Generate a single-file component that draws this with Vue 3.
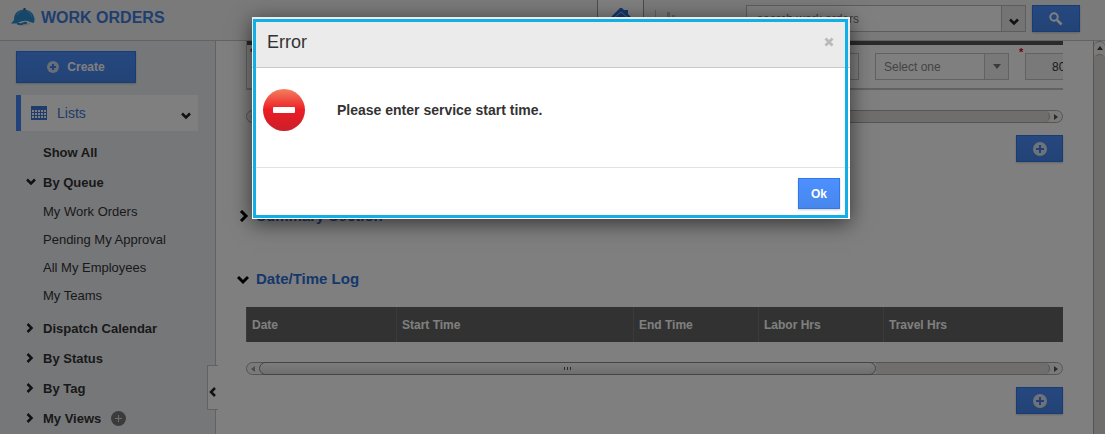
<template>
  <div class="app">
    <header class="topbar">
      <div class="brand">
        <svg width="24" height="18" viewBox="0 0 24 18">
          <path d="M3 11.500C3 5 7.500 1.500 13 1.500S23 5.500 23.500 11c.2 2-.3 3.500-1 4-3-.5-5-2.500-9-2.200-4 .2-6 2.500-9 2.700H0c1-1.500 2.500-2 3-4z" fill="#2f8fd0" />
          <path d="M13.500 0v2" stroke="#3a5a70" stroke-width="2" />
          <path d="M6 7c1-2.500 3-4 5-4.500M16 3c2.500 1 4 3 5 6" fill="none" stroke="#5cb2ea" />
          <path d="M6 16c2-1 3 1 5 0s3-2 5-.5" fill="none" stroke="#2f8fd0" stroke-width="2" />
          <path d="M12 17c2 0 5 0 7-2" fill="none" stroke="#c3ccd2" />
        </svg>
        <h1>WORK ORDERS</h1>
      </div>
      <div class="tools">
        <a href="#" class="home" aria-label="Home">
          <svg width="20" height="18" viewBox="0 0 20 18">
            <path d="M13 2h4v6h-4z" fill="#2a6fd6" />
            <path d="M9 0h2l9 9v1h-3v8H3v-8H0V9z" fill="#2a6fd6" />
            <path d="M3 10l7-6 7 6" fill="none" stroke="#b4cbee" />
            <path d="M8 12h4v6H8z" fill="#fff" />
          </svg>
        </a>
        <a href="#" class="chart" aria-label="Reports">
          <svg width="24" height="18" viewBox="0 0 24 18">
            <path d="M0 0h1v18H0zM12 2h3v16h-3zM17 5h3v13h-3zM7 9h3v9H7z" fill="#c0c0c0" />
          </svg>
        </a>
      </div>
      <div class="search">
        <input v-model="query" type="text" aria-label="Search" placeholder="search work orders" />
        <button class="search-options" aria-label="Search options">
          <svg width="10" height="8" viewBox="0 0 10 8"><path d="M1 1.500l4 4 4-4" /></svg>
        </button>
        <button class="btn search-go" aria-label="Search">
          <svg width="14" height="14" viewBox="0 0 14 14">
            <circle cx="5" cy="5" r="3.700" fill="none" stroke="#fff" stroke-width="2" />
            <path d="M8 8l4.500 4.500" stroke="#fff" stroke-width="2.500" />
          </svg>
        </button>
      </div>
    </header>

    <div class="main">
      <aside class="sidebar">
        <button class="btn create">
          <svg width="12" height="12" viewBox="0 0 12 12">
            <circle cx="6" cy="6" r="6" fill="#d0dcf2" />
            <path d="M6 3v6M3 6h6" stroke="#4584ee" stroke-width="2" />
          </svg>
          Create
        </button>
        <button class="lists">
          <svg width="16" height="14" viewBox="0 0 16 14">
            <path d="M0 0h16v14H0z" fill="#4078d8" />
            <path d="M1 5h14M1 8h14M1 11h14" stroke="#fff" stroke-width="2" stroke-dasharray="2 1" />
          </svg>
          <span>Lists</span>
          <svg class="chev" width="10" height="8" viewBox="0 0 10 8"><path d="M1 1.500l4 4 4-4" /></svg>
        </button>
        <nav>
          <template v-for="item in menu" :key="item.label">
            <a href="#" class="item">
              <span class="mark">
                <svg v-if="item.children" class="chev" width="10" height="8" viewBox="0 0 10 8"><path d="M1 1.500l4 4 4-4" /></svg>
                <svg v-else-if="item.arrow" class="chev" width="8" height="10" viewBox="0 0 8 10"><path d="M1.500 1l4 4-4 4" /></svg>
              </span>
              {{ item.label }}
              <svg v-if="item.add" class="add-view" width="15" height="15" viewBox="0 0 15 15">
                <circle cx="7.500" cy="7.500" r="7.500" fill="#777" />
                <path d="M7.500 4v7M4 7.500h7" stroke="#ddd" />
              </svg>
            </a>
            <div v-if="item.children" class="children">
              <a v-for="child in item.children" :key="child" href="#">{{ child }}</a>
            </div>
          </template>
        </nav>
        <button class="collapse" aria-label="Collapse sidebar">
          <svg class="chev" width="8" height="10" viewBox="0 0 8 10"><path d="M6 1L2 5l4 4" /></svg>
        </button>
      </aside>

      <main class="content">
        <div class="fields">
          <div class="field wide">
            <span class="req">*</span>
            <input type="text" aria-label="Description" />
          </div>
          <div class="field mid">
            <div class="select">
              <select aria-label="Type">
                <option>Select one</option>
              </select>
              <span class="arrow">
                <svg width="8" height="5" viewBox="0 0 8 5"><path d="M0 0h8L4 5z" fill="#777" /></svg>
              </span>
            </div>
          </div>
          <div class="field cut">
            <span class="req">*</span>
            <input class="rate" type="text" aria-label="Rate" value="80" />
          </div>
        </div>
        <div class="hscroll">
          <span class="end"><svg width="4" height="6" viewBox="0 0 4 6"><path d="M4 0v6L0 3z" fill="#999" /></svg></span>
          <span class="thumb short"></span>
          <span class="track"></span>
          <span class="end"><svg width="4" height="6" viewBox="0 0 4 6"><path d="M0 0v6l4-3z" fill="#555" /></svg></span>
        </div>
        <div class="actions">
          <button class="btn add" aria-label="Add line">
            <svg width="14" height="14" viewBox="0 0 14 14">
              <circle cx="7" cy="7" r="7" fill="#dde4f2" />
              <path d="M7 3v8M3 7h8" stroke="#4584ee" stroke-width="2" />
            </svg>
          </button>
        </div>

        <h2 class="summary">
          <svg class="chev" width="12" height="12" viewBox="0 0 12 12"><path d="M4 1l5 5-5 5" /></svg>
          Summary Section
        </h2>
        <h2 class="log">
          <svg class="chev" width="12" height="12" viewBox="0 0 12 12"><path d="M1 4l5 5 5-5" /></svg>
          Date/Time Log
        </h2>

        <table>
          <thead>
            <tr>
              <th v-for="col in columns" :key="col.label" :style="{ width: col.width }">{{ col.label }}</th>
            </tr>
          </thead>
        </table>
        <div class="hscroll">
          <span class="end"><svg width="4" height="6" viewBox="0 0 4 6"><path d="M4 0v6L0 3z" fill="#999" /></svg></span>
          <span class="thumb"><i></i><i></i><i></i></span>
          <span class="track"></span>
          <span class="end"><svg width="4" height="6" viewBox="0 0 4 6"><path d="M0 0v6l4-3z" fill="#555" /></svg></span>
        </div>
        <div class="actions">
          <button class="btn add" aria-label="Add time entry">
            <svg width="14" height="14" viewBox="0 0 14 14">
              <circle cx="7" cy="7" r="7" fill="#dde4f2" />
              <path d="M7 3v8M3 7h8" stroke="#4584ee" stroke-width="2" />
            </svg>
          </button>
        </div>
      </main>

      <div class="vscroll">
        <span class="up"><svg width="6" height="4" viewBox="0 0 6 4"><path d="M0 4h6L3 0z" fill="#444" /></svg></span>
        <span class="vtrack"></span>
      </div>
    </div>

    <div v-if="showError" class="backdrop">
      <div class="modal" role="dialog" aria-labelledby="error-title">
        <div class="modal-head">
          <h3 id="error-title">Error</h3>
          <button class="close" aria-label="Close" @click="showError = false">
            <svg width="10" height="10" viewBox="0 0 10 10"><path d="M1.500 1.500l7 7M8.500 1.500l-7 7" stroke="#b9b9b9" stroke-width="2.800" /></svg>
          </button>
        </div>
        <div class="modal-body">
          <svg width="42" height="42" viewBox="0 0 42 42">
            <defs>
              <linearGradient id="stop" x1="0" y1="0" x2="0" y2="1">
                <stop offset="0" stop-color="#f4805f" />
                <stop offset="0.5" stop-color="#ec1c24" />
                <stop offset="1" stop-color="#c9202b" />
              </linearGradient>
            </defs>
            <circle cx="21" cy="21" r="21" fill="url(#stop)" />
            <rect x="10" y="18" width="22" height="6" rx="1" fill="#fff" />
          </svg>
          <p>Please enter service start time.</p>
        </div>
        <div class="modal-foot">
          <button class="btn ok" @click="showError = false">Ok</button>
        </div>
      </div>
    </div>
  </div>
</template>

<script setup>
import { ref } from 'vue'

const query = ref('')
const showError = ref(true)

const menu = [
  { label: 'Show All' },
  {
    label: 'By Queue',
    children: ['My Work Orders', 'Pending My Approval', 'All My Employees', 'My Teams']
  },
  { label: 'Dispatch Calendar', arrow: true },
  { label: 'By Status', arrow: true },
  { label: 'By Tag', arrow: true },
  { label: 'My Views', arrow: true, add: true }
]

const columns = [
  { label: 'Date', width: '150px' },
  { label: 'Start Time', width: '237px' },
  { label: 'End Time', width: '125px' },
  { label: 'Labor Hrs', width: '125px' },
  { label: 'Travel Hrs', width: 'auto' }
]
</script>

<style>
body {
  margin: 0;
}
</style>

<style scoped>
.app {
  position: relative;
  display: flex;
  flex-direction: column;
  height: 100vh;
  overflow: hidden;
  background: #fff;
  color: #333;
  font-family: "Liberation Sans", Arial, sans-serif;
  font-size: 13px;
}

.app *,
.app *::after {
  box-sizing: border-box;
}

h1, h2, h3, p {
  margin: 0;
}

a {
  color: inherit;
  text-decoration: none;
}

button, input, select {
  margin: 0;
  padding: 0;
  border: 0;
  border-radius: 0;
  background: none;
  color: inherit;
  font-family: inherit;
}

svg {
  display: block;
  flex: none;
}

.chev path,
.search-options path {
  fill: none;
  stroke: #222;
  stroke-width: 2.5;
}

.btn {
  display: flex;
  align-items: center;
  justify-content: center;
  border: 1px solid #3079ed;
  background: linear-gradient(#4d90fe, #4787ed);
  color: #fff;
  font-weight: bold;
  box-shadow: 0 1px 2px rgba(0, 0, 0, 0.2);
}

/* top bar */
.topbar {
  display: flex;
  flex: none;
  justify-content: flex-end;
  height: 41px;
  padding-right: 25px;
  border-bottom: 1px solid #c6c6c6;
  background: #f5f5f5;
}

.brand {
  display: flex;
  flex: 1;
  gap: 6px;
  padding: 8px 0 0 11px;
}

.brand h1 {
  color: #3f7de0;
  font-size: 16px;
  line-height: 20px;
}

.tools {
  display: flex;
  margin-right: 67px;
}

.home {
  display: flex;
  justify-content: center;
  width: 47px;
  padding-top: 8px;
  border-left: 1px solid #999;
  border-right: 1px solid #999;
  background: #fff;
}

.chart {
  padding: 10px 0 0 11px;
}

.search {
  display: flex;
  height: 27px;
  margin-top: 5px;
}

.search input {
  width: 256px;
  padding: 0 10px;
  border: 1px solid #bbb;
  background: #fff;
  font-size: 12px;
}

.search input::placeholder {
  color: #777;
  opacity: 1;
}

.search-options {
  display: flex;
  align-items: flex-end;
  justify-content: center;
  width: 24px;
  padding-bottom: 5px;
  border: 1px solid #bbb;
  border-left: 0;
  background: #e8e8e8;
}

.search-go {
  width: 48px;
  margin-left: 6px;
}

/* sidebar */
.main {
  display: flex;
  flex: 1;
  min-height: 0;
}

.sidebar {
  position: relative;
  flex: none;
  width: 216px;
  padding: 10px 17px 0 16px;
  border-right: 1px solid #c4c4c4;
  background: #edeff3;
}

.create {
  gap: 8px;
  width: 120px;
  height: 32px;
  font-size: 12px;
}

.lists {
  display: flex;
  align-items: center;
  gap: 10px;
  width: 100%;
  height: 36px;
  margin-top: 12px;
  padding: 0 7px 0 10px;
  border-left: 5px solid #4285f4;
  background: #fff;
  color: #4078d8;
  font-size: 14px;
}

.lists .chev {
  margin: 5px 0 0 auto;
}

nav {
  margin-top: 6px;
}

.item {
  display: flex;
  align-items: center;
  height: 30px;
  padding-left: 10px;
  font-weight: bold;
}

.mark {
  width: 17px;
}

.add-view {
  margin-left: 10px;
}

.children {
  padding: 1px 0 3px 27px;
}

.children a {
  display: block;
  line-height: 28px;
}

.collapse {
  position: absolute;
  top: 324px;
  right: -3px;
  display: flex;
  align-items: center;
  width: 11px;
  height: 45px;
  padding: 9px 0 0 1px;
  border: 1px solid #c4c4c4;
  border-right: 0;
  background: #fff;
}

/* content */
.content {
  flex: 1;
  min-width: 0;
  padding: 0 30px 0 21px;
}

.fields {
  display: flex;
  height: 49px;
  margin-left: 9px;
  border-left: 1px solid #c4c4c4;
  border-bottom: 2px solid #c4c4c4;
}

.field {
  position: relative;
  flex: none;
  padding: 8px 7px 0 9px;
  border-top: 4px solid #555;
}

.field.wide {
  flex: 1;
}

.field.mid {
  width: 150px;
}

.field.cut {
  width: 47px;
  overflow: hidden;
}

.field input {
  display: block;
  width: 100%;
  height: 27px;
  border: 1px solid #c4c4c4;
  background: #fff;
}

.field .rate {
  width: 60px;
  padding-left: 26px;
  background: #f2f2f2;
  font-size: 12px;
}

.req {
  position: absolute;
  top: 1px;
  left: 3px;
  color: #e00020;
  font-size: 11px;
  font-weight: bold;
  line-height: 12px;
}

.select {
  display: flex;
  height: 27px;
  border: 1px solid #c4c4c4;
}

.select select {
  flex: 1;
  min-width: 0;
  padding-left: 8px;
  appearance: none;
  color: #888;
  font-size: 12px;
}

.select .arrow {
  display: flex;
  align-items: center;
  justify-content: center;
  width: 24px;
  border-left: 1px solid #c4c4c4;
  background: #f0f0f0;
}

.hscroll {
  display: flex;
  height: 13px;
  margin: 20px 0 0 9px;
  border: 1px solid #aaa;
  border-radius: 7px;
  background: #f4f4f4;
}

.hscroll .end {
  display: flex;
  align-items: center;
  justify-content: center;
  width: 12px;
}

.hscroll .thumb {
  display: flex;
  flex: 617;
  align-items: center;
  justify-content: center;
  gap: 2px;
  margin: -1px 0;
  border: 1px solid #888;
  border-radius: 7px;
  background: linear-gradient(#fafafa, #dcdcdc);
}

.hscroll .thumb.short {
  flex: 174;
}

.thumb i {
  width: 1px;
  height: 3px;
  background: #555;
}

.hscroll .track {
  flex: 174;
  border-right: 1px solid #aaa;
  border-radius: 0 6px 6px 0;
  background: #e0ddd8;
}

.actions {
  display: flex;
  justify-content: flex-end;
  margin-top: 12px;
}

.add {
  width: 47px;
  height: 27px;
}

h2 {
  display: flex;
  align-items: center;
  gap: 7px;
  color: #2a6fd6;
  font-size: 15px;
  line-height: 20px;
}

h2 .chev path {
  stroke: #000;
  stroke-width: 3;
}

.summary {
  margin-top: 44px;
}

.log {
  margin-top: 43px;
}

table {
  width: calc(100% - 9px);
  margin: 18px 0 0 9px;
  border-collapse: collapse;
  table-layout: fixed;
}

th {
  height: 35px;
  padding: 0 5px;
  border: solid #777;
  border-width: 0 0 0 1px;
  background: #646464;
  color: #fff;
  font-size: 12px;
  text-align: left;
}

/* page scrollbar */
.vscroll {
  display: flex;
  flex: none;
  flex-direction: column;
  width: 12px;
  border-left: 1px solid #aaa;
  background: #f4f4f4;
}

.up {
  display: flex;
  align-items: center;
  justify-content: center;
  height: 13px;
  border-top: 1px solid #aaa;
  border-radius: 6px 6px 0 0;
}

.vtrack {
  flex: 1;
  border-top: 1px solid #aaa;
  border-radius: 6px 6px 0 0;
  background: #e0ddd8;
}

/* error dialog */
.backdrop {
  position: absolute;
  inset: 0;
  display: flex;
  align-items: flex-start;
  justify-content: center;
  padding: 17px 3px 0 0;
  background: rgba(0, 0, 0, 0.5);
}

.modal {
  position: relative;
  width: 598px;
  max-width: 100%;
  background: #fff;
  box-shadow: 0 4px 20px rgba(0, 0, 0, 0.6);
}

.modal::after {
  content: "";
  position: absolute;
  inset: 2px 2px 1px 1px;
  border: 3px solid #12aee8;
  pointer-events: none;
}

.modal-head {
  display: flex;
  align-items: center;
  justify-content: space-between;
  height: 51px;
  padding: 0 16px 0 15px;
  border-bottom: 1px solid #c8c8c8;
  background: #ebebeb;
}

.modal-head h3 {
  font-size: 18px;
  font-weight: normal;
}

.modal-body {
  display: flex;
  align-items: center;
  gap: 32px;
  padding: 21px 11px 36px;
}

.modal-body p {
  font-size: 14px;
  font-weight: bold;
}

.modal-foot {
  display: flex;
  justify-content: flex-end;
  padding: 10px;
  border-top: 1px solid #e2e2e2;
}

.ok {
  width: 42px;
  height: 31px;
  font-size: 12px;
}
</style>
